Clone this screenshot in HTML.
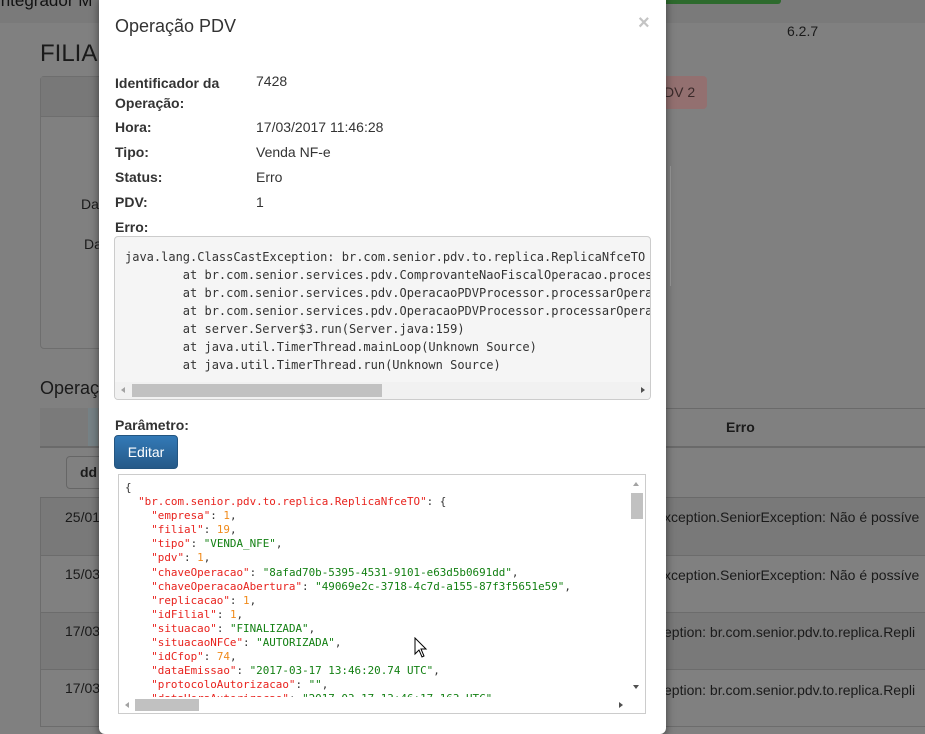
<!DOCTYPE html>
<html><head><meta charset="utf-8">
<style>
*{box-sizing:border-box;margin:0;padding:0}
body{width:925px;height:727px;overflow:hidden;background:#808080;font-family:"Liberation Sans",sans-serif;position:relative}
.abs{position:absolute}
.nav{left:0;top:0;width:925px;height:23px;background:#7a7a7a}
.modal{left:99px;top:-6px;width:567px;height:740px;background:#fff;border-radius:6px;box-shadow:0 3px 9px rgba(0,0,0,.5)}
.lbl{position:absolute;left:115px;font-weight:bold;font-size:14px;color:#333}
.val{position:absolute;left:256px;font-size:14px;color:#333}
.bgt{color:#1a1a1a;font-size:14px;position:absolute}
pre{font-family:"DejaVu Sans Mono","Liberation Mono",monospace;white-space:pre}
.k{color:#e8231e}.s{color:#138013}.n{color:#f08a1a}.p{color:#333}
</style></head><body>
<div class="abs nav"></div>
<div class="bgt" style="left:-4px;top:-9px;font-size:17px;color:#111">Integrador M</div>
<div class="abs" style="left:650px;top:0;width:131px;height:4px;background:#2d6a2d;border-radius:0 0 3px 3px"></div>
<div class="bgt" style="left:787px;top:23px;font-size:14px">6.2.7</div>
<div class="bgt" style="left:40px;top:40px;font-size:24px">FILIA</div>
<div class="abs" style="left:40px;top:76px;width:70px;height:273px;border:1px solid #6e6e6e;border-radius:4px"></div>
<div class="abs" style="left:41px;top:77px;width:70px;height:40px;background:#787878;border-bottom:1px solid #6e6e6e"></div>
<div class="bgt" style="left:81px;top:196px">Da</div>
<div class="bgt" style="left:84px;top:236px">Da</div>
<div class="abs" style="left:660px;top:76px;width:47px;height:33px;background:#937070;border-radius:4px"></div>
<div class="bgt" style="left:664px;top:84px;font-size:14px;color:#3a2a2a">DV 2</div>
<div class="abs" style="left:670px;top:166px;width:1px;height:120px;background:#999"></div>
<div class="bgt" style="left:40px;top:378px;font-size:18px">Operaç</div>
<div class="abs" style="left:40px;top:408px;width:885px;height:1px;background:#6a6a6a"></div>
<div class="abs" style="left:40px;top:408px;width:70px;height:38px;background:#7a7a7a"></div>
<div class="abs" style="left:88px;top:408px;width:10px;height:38px;background:#768286"></div>
<div class="abs" style="left:40px;top:446px;width:885px;height:2px;background:#6a6a6a"></div>
<div class="bgt" style="left:726px;top:419px;font-weight:bold">Erro</div>
<div class="abs" style="left:66px;top:456px;width:50px;height:33px;border:1px solid #666;border-radius:4px"></div>
<div class="bgt" style="left:80px;top:464px;font-weight:bold">dd</div>
<div class="abs" style="left:40px;top:497px;width:885px;height:1px;background:#6a6a6a"></div>
<div class="abs" style="left:40px;top:498px;width:885px;height:58px;background:#797979;border-bottom:1px solid #6c6c6c"></div>
<div class="abs" style="left:40px;top:556px;width:885px;height:57px;border-bottom:1px solid #6c6c6c"></div>
<div class="abs" style="left:40px;top:613px;width:885px;height:57px;background:#797979;border-bottom:1px solid #6c6c6c"></div>
<div class="abs" style="left:40px;top:670px;width:885px;height:57px;border-bottom:1px solid #6c6c6c"></div>
<div class="abs" style="left:40px;top:498px;width:1px;height:229px;background:#6c6c6c"></div>
<div class="bgt" style="left:65px;top:509px">25/01</div>
<div class="bgt" style="left:65px;top:566px">15/03</div>
<div class="bgt" style="left:65px;top:623px">17/03</div>
<div class="bgt" style="left:65px;top:680px">17/03</div>
<div class="bgt" style="left:664px;top:567px">xception.SeniorException: Não é possíve</div>
<div class="bgt" style="left:664px;top:509px">xception.SeniorException: Não é possíve</div>
<div class="bgt" style="left:664px;top:624px">eption: br.com.senior.pdv.to.replica.Repli</div>
<div class="bgt" style="left:664px;top:682px">eption: br.com.senior.pdv.to.replica.Repli</div>

<div class="abs modal"></div>
<div class="abs" style="left:115px;top:16px;font-size:18px;color:#333">Operação PDV</div>
<div class="abs" style="left:638px;top:12px;font-size:20px;color:#c4c4c4;font-weight:bold">×</div>
<div class="lbl" style="top:73px;line-height:20px">Identificador da<br>Operação:</div>
<div class="val" style="top:73px">7428</div>
<div class="lbl" style="top:119px">Hora:</div><div class="val" style="top:119px">17/03/2017 11:46:28</div>
<div class="lbl" style="top:144px">Tipo:</div><div class="val" style="top:144px">Venda NF-e</div>
<div class="lbl" style="top:169px">Status:</div><div class="val" style="top:169px">Erro</div>
<div class="lbl" style="top:194px">PDV:</div><div class="val" style="top:194px">1</div>
<div class="lbl" style="top:219px">Erro:</div>
<div class="abs" style="left:114px;top:236px;width:537px;height:164px;background:#f5f5f5;border:1px solid #ccc;border-radius:4px;overflow:hidden">
<pre style="position:absolute;left:10px;top:11px;font-size:12px;line-height:18px;color:#333">java.lang.ClassCastException: br.com.senior.pdv.to.replica.ReplicaNfceTO c
        at br.com.senior.services.pdv.ComprovanteNaoFiscalOperacao.process
        at br.com.senior.services.pdv.OperacaoPDVProcessor.processarOperac
        at br.com.senior.services.pdv.OperacaoPDVProcessor.processarOperac
        at server.Server$3.run(Server.java:159)
        at java.util.TimerThread.mainLoop(Unknown Source)
        at java.util.TimerThread.run(Unknown Source)</pre>
<div class="abs" style="left:0;top:145px;width:535px;height:17px;background:#f1f1f1"></div>
<div class="abs" style="left:17px;top:147px;width:250px;height:13px;background:#c1c1c1"></div>
<div class="abs" style="left:6px;top:150px;width:0;height:0;border:3px solid transparent;border-right:4px solid #a3a3a3;border-left:0"></div>
<div class="abs" style="left:526px;top:150px;width:0;height:0;border:3px solid transparent;border-left:4px solid #505050;border-right:0"></div>
</div>
<div class="lbl" style="top:417px">Parâmetro:</div>
<div class="abs" style="left:114px;top:435px;width:64px;height:34px;border-radius:4px;background:linear-gradient(#337ab7,#265a88);border:1px solid #245580;color:#fff;font-size:14px;text-align:center;line-height:32px">Editar</div>
<div class="abs" style="left:118px;top:474px;width:528px;height:240px;background:#fff;border:1px solid #ccc;overflow:hidden">
<pre style="position:absolute;left:6px;top:6px;font-size:10.9px;line-height:14.1px"><span class="p">{</span>
  <span class="k">"br.com.senior.pdv.to.replica.ReplicaNfceTO"</span><span class="p">: {</span>
    <span class="k">"empresa"</span><span class="p">: </span><span class="n">1</span><span class="p">,</span>
    <span class="k">"filial"</span><span class="p">: </span><span class="n">19</span><span class="p">,</span>
    <span class="k">"tipo"</span><span class="p">: </span><span class="s">"VENDA_NFE"</span><span class="p">,</span>
    <span class="k">"pdv"</span><span class="p">: </span><span class="n">1</span><span class="p">,</span>
    <span class="k">"chaveOperacao"</span><span class="p">: </span><span class="s">"8afad70b-5395-4531-9101-e63d5b0691dd"</span><span class="p">,</span>
    <span class="k">"chaveOperacaoAbertura"</span><span class="p">: </span><span class="s">"49069e2c-3718-4c7d-a155-87f3f5651e59"</span><span class="p">,</span>
    <span class="k">"replicacao"</span><span class="p">: </span><span class="n">1</span><span class="p">,</span>
    <span class="k">"idFilial"</span><span class="p">: </span><span class="n">1</span><span class="p">,</span>
    <span class="k">"situacao"</span><span class="p">: </span><span class="s">"FINALIZADA"</span><span class="p">,</span>
    <span class="k">"situacaoNFCe"</span><span class="p">: </span><span class="s">"AUTORIZADA"</span><span class="p">,</span>
    <span class="k">"idCfop"</span><span class="p">: </span><span class="n">74</span><span class="p">,</span>
    <span class="k">"dataEmissao"</span><span class="p">: </span><span class="s">"2017-03-17 13:46:20.74 UTC"</span><span class="p">,</span>
    <span class="k">"protocoloAutorizacao"</span><span class="p">: </span><span class="s">""</span><span class="p">,</span>
    <span class="k">"dataHoraAutorizacao"</span><span class="p">: </span><span class="s">"2017-03-17 13:46:17.163 UTC"</span></pre>
<div class="abs" style="left:0;top:222px;width:526px;height:17px;background:#fff"></div>
<div class="abs" style="left:16px;top:224px;width:64px;height:12px;background:#c1c1c1"></div>
<div class="abs" style="left:6px;top:227px;border:3px solid transparent;border-right:4px solid #a3a3a3;border-left:0"></div>
<div class="abs" style="left:500px;top:227px;border:3px solid transparent;border-left:4px solid #505050;border-right:0"></div>
<div class="abs" style="left:510px;top:0;width:17px;height:222px;background:#fff"></div>
<div class="abs" style="left:512px;top:18px;width:12px;height:26px;background:#c1c1c1"></div>
<div class="abs" style="left:514px;top:7px;border:3px solid transparent;border-bottom:4px solid #a3a3a3;border-top:0"></div>
<div class="abs" style="left:514px;top:210px;border:3px solid transparent;border-top:4px solid #505050;border-bottom:0"></div>
</div>
<svg class="abs" style="left:414px;top:637px" width="14" height="22" viewBox="0 0 14 22"><path d="M1 1 L1 17 L5 13 L8 20 L10 19 L7 12 L12 12 Z" fill="#fff" stroke="#000" stroke-width="1"/></svg>
</body></html>
